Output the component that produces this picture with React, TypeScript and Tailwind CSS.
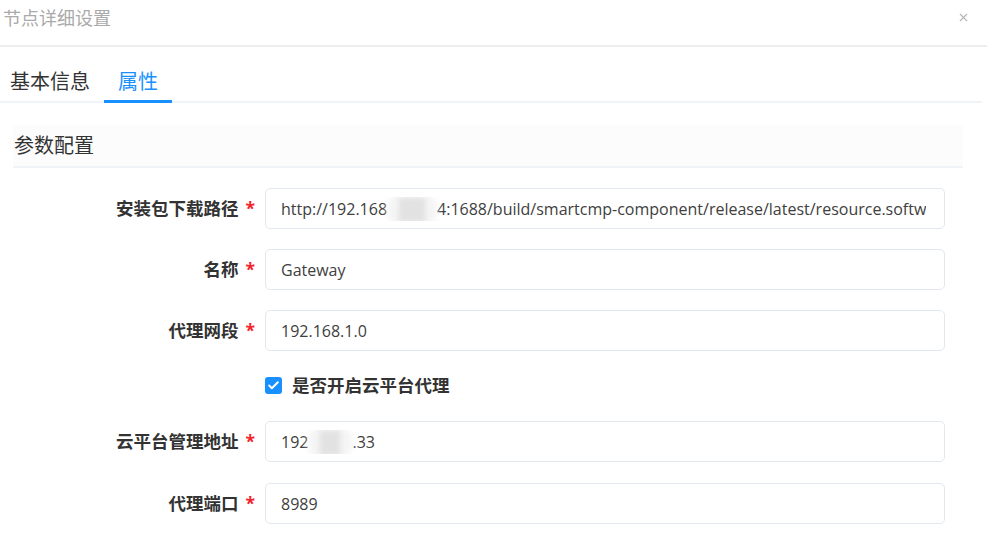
import { Check, X } from "lucide-react";

const font = { fontFamily: "'Open Sans', 'Noto Sans CJK SC', sans-serif" };

function Blur({ w }: { w: number }) {
  return (
    <span className="relative inline-block h-[1em] align-middle" style={{ width: w }}>
      <span className="absolute inset-x-0 -inset-y-3 rounded-full bg-[#f4f4f4] blur-[3px]" />
      <span className="absolute inset-x-3 -inset-y-1 bg-[#e2e2e2] blur-[2px]" />
    </span>
  );
}

function Row({ label, children }: { label: string; children: React.ReactNode }) {
  return (
    <div className="flex items-center">
      <div className="w-[255px] shrink-0 text-right text-[17.5px] font-bold text-[#333]">
        {label}
        <span className="ml-[7px] text-[#f5222d]">*</span>
      </div>
      <div className="ml-[10px] flex h-[41px] w-[680px] items-center rounded-[5px] border border-[#e3e8ef] bg-white px-[15px]">
        <div className="overflow-hidden whitespace-nowrap text-[16px] text-[#404040]">{children}</div>
      </div>
    </div>
  );
}

export default function App() {
  return (
    <div className="h-[555px] w-[987px] overflow-hidden bg-white" style={font}>
      {/* header */}
      <div className="flex h-[47px] items-center justify-between border-b-2 border-[#eeeeee] pl-[3px] pr-[17px]">
        <span className="-mt-[9px] text-[18px] text-[#aaaaaa]">节点详细设置</span>
        <X size={13} strokeWidth={2} className="-mt-[10px] text-[#b5b5b5]" />
      </div>

      {/* tabs */}
      <div className="mr-[5px] flex h-[56px] items-end border-b-2 border-[#f0f3f7]">
        <div className="-mb-[2px] flex h-[54px] items-center pl-[10px] pr-[14px] pt-[12px] text-[20px] text-[#333]">基本信息</div>
        <div className="-mb-[2px] flex h-[54px] items-center border-b-[3px] border-[#1890ff] px-[14px] pt-[15px] text-[20px] text-[#1890ff]">属性</div>
      </div>

      {/* section */}
      <div className="ml-[13px] mr-[24px] mt-[22px] flex h-[43px] items-center border-b-2 border-[#f0f3f7] bg-[#fcfcfc] pl-[1px] text-[20px] text-[#333]">
        参数配置
      </div>

      <div className="mt-[20px] flex flex-col">
        <Row label="安装包下载路径">
          http://192.168<Blur w={50} />4:1688/build/smartcmp-component/release/latest/resource.softw
        </Row>
        <div className="mt-[20px]">
          <Row label="名称">Gateway</Row>
        </div>
        <div className="mt-[20px]">
          <Row label="代理网段">192.168.1.0</Row>
        </div>
        <div className="ml-[265px] mt-[25px] flex h-[18px] items-center">
          <span className="flex h-[17px] w-[17px] items-center justify-center rounded-[3px] bg-[#1890ff]">
            <Check size={13} strokeWidth={3.5} className="text-white" />
          </span>
          <span className="ml-[10px] text-[17.5px] font-bold text-[#333]">是否开启云平台代理</span>
        </div>
        <div className="mt-[27px]">
          <Row label="云平台管理地址">
            192<Blur w={44} />.33
          </Row>
        </div>
        <div className="mt-[21px]">
          <Row label="代理端口">8989</Row>
        </div>
      </div>
    </div>
  );
}
